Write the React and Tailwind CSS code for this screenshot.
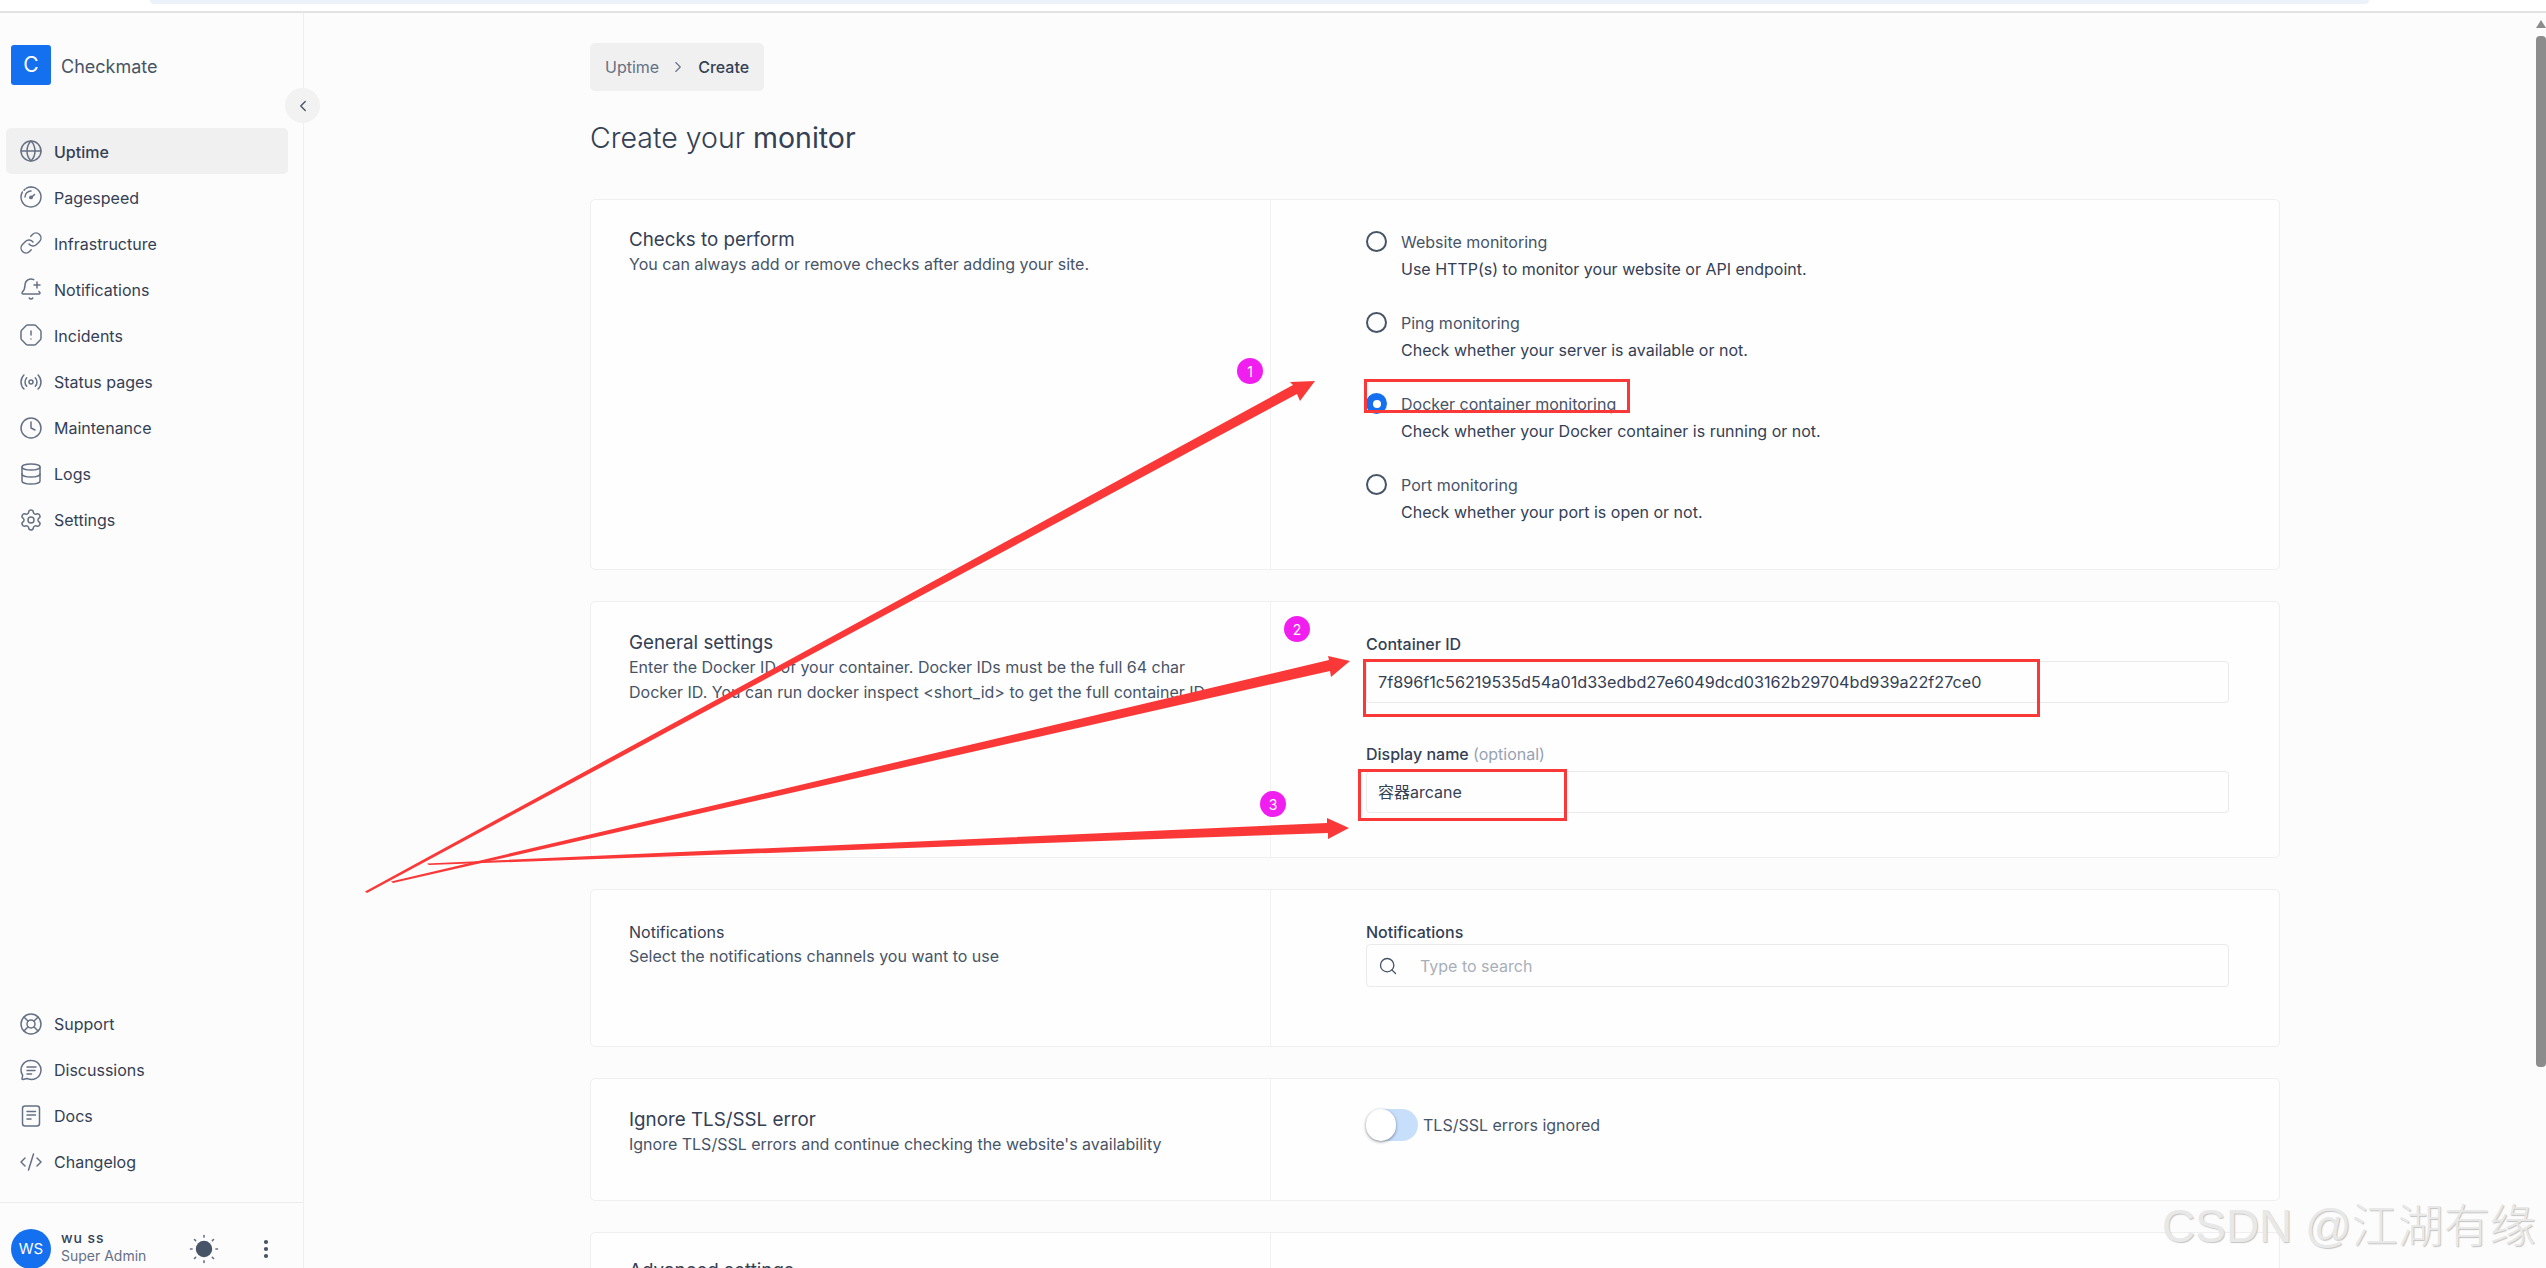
import React from "react";
import { Globe, Link, BellPlus, OctagonAlert, Radio, Clock, Database, Settings, LifeBuoy, CodeXml, EllipsisVertical, ChevronLeft, ChevronRight, Search } from "lucide-react";

const Gauge = (p) => (
  <svg viewBox="0 0 24 24" fill="none" stroke="currentColor" strokeWidth="1.5" strokeLinecap="round" strokeLinejoin="round" {...p}>
    <path d="M12 2a10 10 0 1 1-8.66 5" />
    <path d="M5 5.2 6.2 4" />
    <path d="M7.5 3.1A10 10 0 0 1 12 2" />
    <path d="M6 12a6 6 0 0 1 6-6" />
    <path d="M12.2 12.6 15.5 9.5" strokeWidth="1.5" />
    <circle cx="12" cy="12.4" r="1.2" fill="currentColor" />
  </svg>
);
const Chat = (p) => (
  <svg viewBox="0 0 24 24" fill="none" stroke="currentColor" strokeWidth="1.5" strokeLinecap="round" strokeLinejoin="round" {...p}>
    <path d="M12.5 2.5a9.5 9.5 0 1 1-3.6 18.3l-.9-.4-4.2 1.1c-.5.1-.9-.3-.8-.8l.7-3.3-.4-.8A9.5 9.5 0 0 1 12.5 2.5Z" />
    <path d="M8 9h9M8 12.5h8M8 16h4.5" />
  </svg>
);
const Doc = (p) => (
  <svg viewBox="0 0 24 24" fill="none" stroke="currentColor" strokeWidth="1.7" strokeLinecap="round" strokeLinejoin="round" {...p}>
    <rect x="3.5" y="2" width="17" height="20" rx="2.5" />
    <path d="M8 7.5h8.5M8 11h8.5M8 15h4" />
  </svg>
);
const Sun = (p) => (
  <svg viewBox="0 0 30 30" fill="none" stroke="#667085" strokeWidth="1.6" strokeLinecap="round" {...p}>
    <circle cx="15" cy="15" r="8.2" fill="#475467" stroke="none" />
    <path d="M15 1.5v1.6M15 26.9v1.6M1.5 15h1.6M26.9 15h1.6M5.5 5.5l1.1 1.1M23.4 23.4l1.1 1.1M5.5 24.5l1.1-1.1M23.4 6.6l1.1-1.1" />
  </svg>
);

const mainNav = [
  ["Uptime", Globe, true],
  ["Pagespeed", Gauge],
  ["Infrastructure", Link],
  ["Notifications", BellPlus],
  ["Incidents", OctagonAlert],
  ["Status pages", Radio],
  ["Maintenance", Clock],
  ["Logs", Database],
  ["Settings", Settings],
];
const otherNav = [
  ["Support", LifeBuoy],
  ["Discussions", Chat],
  ["Docs", Doc],
  ["Changelog", CodeXml],
];

function NavItem({ label, Icon, active }) {
  return (
    <div className={"flex h-[46.1px] w-[282px] items-center gap-[11px] rounded-[5px] pl-[13px] text-[16px] " + (active ? "bg-[#f0f0f0] font-medium text-[#344054]" : "text-[#344054]")}>
      <Icon className="h-[24px] w-[24px] shrink-0 text-[#667085]" strokeWidth={1.5} />
      <span className="pt-[1px]">{label}</span>
    </div>
  );
}

function Sidebar() {
  return (
    <aside className="relative flex w-[304px] shrink-0 flex-col border-r border-[#efefef] pt-[32px]">
      <div className="flex items-center gap-[10px] pl-[11px]">
        <div className="flex h-[40px] w-[40px] items-center justify-center rounded-[3px] bg-[#1570ef] text-[21px] text-white">C</div>
        <span className="pt-[2px] text-[18px] text-[#475467]">Checkmate</span>
      </div>
      <button className="absolute left-[285px] top-[75px] flex h-[35px] w-[35px] items-center justify-center rounded-full bg-[#f2f2f2] text-[#475467]">
        <ChevronLeft className="h-[18px] w-[18px]" strokeWidth={1.8} />
      </button>
      <nav className="mt-[43px] flex flex-col pl-[6px]">
        {mainNav.map(([l, I, a]) => <NavItem key={l} label={l} Icon={I} active={a} />)}
      </nav>
      <nav className="mt-auto flex flex-col pl-[6px]">
        {otherNav.map(([l, I]) => <NavItem key={l} label={l} Icon={I} />)}
      </nav>
      <div className="mt-[17px] flex h-[66px] shrink-0 border-t border-[#ececec] pl-[11px] pt-[26px]">
        <div className="flex h-[40px] w-[40px] shrink-0 items-center justify-center rounded-full bg-[#1570ef] text-[15px] text-white">WS</div>
        <div className="ml-[10px] w-[120px]">
          <div className="text-[14px] font-medium leading-[18px] tracking-[0.9px] text-[#344054]">wu ss</div>
          <div className="text-[14px] leading-[18px] text-[#667085]">Super Admin</div>
        </div>
        <Sun className="mt-[5px] ml-[8px] h-[30px] w-[30px]" />
        <EllipsisVertical className="ml-[35px] mt-[8px] h-[24px] w-[24px] text-[#475467]" strokeWidth={2.2} />
      </div>
    </aside>
  );
}

function Card({ className, left, right }) {
  return (
    <section className={"flex shrink-0 rounded-[5px] border border-[#efefef] bg-[#fefefe] " + className}>
      <div className="w-[680px] shrink-0 border-r border-[#f1f1f1] px-[38px]">{left}</div>
      <div className="flex-1 pl-[95px] pr-[50px]">{right}</div>
    </section>
  );
}

const H = ({ children }) => <h2 className="text-[18.8px] leading-[24px] text-[#344054]">{children}</h2>;
const P = ({ children }) => <p className="text-[16px] leading-[25px] text-[#475467]">{children}</p>;
const Label = ({ children }) => <div className="text-[16px] font-medium leading-[24px] text-[#344054]">{children}</div>;

function RadioRow({ title, desc, checked }) {
  return (
    <div className="relative pl-[35px]">
      <span className={"absolute left-0 top-[1px] flex h-[21px] w-[21px] items-center justify-center rounded-full " + (checked ? "bg-[#1570ef]" : "border-[2.5px] border-[#475467]")}>
        {checked && <span className="h-[8px] w-[8px] rounded-full bg-white" />}
      </span>
      <div className="text-[16px] leading-[24px] text-[#475467]">{title}</div>
      <div className="mt-[3px] text-[16px] leading-[24px] text-[#344054]">{desc}</div>
    </div>
  );
}

const Input = ({ className, children }) => (
  <div className={"flex items-center rounded-[4px] border border-[#eaeaea] bg-[#fefefe] pl-[11px] text-[16px] text-[#344054] " + className}>{children}</div>
);

const Badge = ({ className, children }) => (
  <div className={"absolute flex h-[26px] w-[26px] items-center justify-center rounded-full bg-[#f01ff0] text-[14px] text-white " + className}>{children}</div>
);

function Annotations() {
  return (
    <>
      <svg className="pointer-events-none absolute left-0 top-0 h-[1268px] w-[2546px]" viewBox="0 0 2546 1268">
        <polygon fill="#fb3838" points="365,891.5 1293,385 1290,382 1315,381 1300,401 1297,394 367,893" />
        <polygon fill="#fb3838" points="391,881.5 1329,660 1328,656 1350,661 1331,677 1330,671 393,883" />
        <polygon fill="#fb3838" points="427,863.5 1327,823 1327,818 1349,828 1328,839 1328,833 429,865" />
      </svg>
      <div className="absolute left-[1364px] top-[379px] h-[34px] w-[266px] border-[3px] border-[#fb3838]" />
      <div className="absolute left-[1363px] top-[659px] h-[58px] w-[677px] border-[3px] border-[#fb3838]" />
      <div className="absolute left-[1358px] top-[769px] h-[52px] w-[209px] border-[3px] border-[#fb3838]" />
      <Badge className="left-[1237px] top-[358px]">1</Badge>
      <Badge className="left-[1284px] top-[616px]">2</Badge>
      <Badge className="left-[1260px] top-[791px]">3</Badge>
      <div className="absolute left-[2162px] top-[1198px] whitespace-nowrap font-[family-name:'Liberation_Sans','Noto_Sans_CJK_SC',sans-serif] text-[46px] font-light leading-[56px] text-[#e8e8e8] [text-shadow:1px_1px_1px_#c4c4c4]">CSDN @江湖有缘</div>
    </>
  );
}

export default function App() {
  return (
    <div className="relative flex h-screen w-full flex-col overflow-hidden bg-[#fcfcfc] font-[family-name:Inter,'Noto_Sans_CJK_SC',sans-serif]">
      <header className="h-[13px] shrink-0 border-b-2 border-[#e3e3e3] bg-white pl-[150px]">
        <div className="h-[4px] w-[2219px] rounded-b-[10px] bg-[#ecf2fa]" />
      </header>
      <div className="flex min-h-0 flex-1">
        <Sidebar />
        <main className="min-w-0 flex-1 pl-[286px] pt-[30px]">
          <div className="flex h-[48px] w-[174px] items-center rounded-[5px] bg-[#f0f0f0] pl-[15px] text-[16px]">
            <span className="text-[#667085]">Uptime</span>
            <ChevronRight className="ml-[10px] h-[18px] w-[18px] text-[#667085]" strokeWidth={1.5} />
            <span className="ml-[11px] font-medium text-[#344054]">Create</span>
          </div>
          <h1 className="mt-[29px] text-[28.5px] font-light leading-[36px] text-[#344054]">Create your <span className="font-normal">monitor</span></h1>
          <div className="mt-[43px] flex w-[1690px] flex-col gap-[31px]">
            <Card
              className="h-[371px]"
              left={<div className="pt-[28px]"><H>Checks to perform</H><P>You can always add or remove checks after adding your site.</P></div>}
              right={
                <div className="flex flex-col gap-[30px] pt-[30px]">
                  <RadioRow title="Website monitoring" desc="Use HTTP(s) to monitor your website or API endpoint." />
                  <RadioRow title="Ping monitoring" desc="Check whether your server is available or not." />
                  <RadioRow checked title="Docker container monitoring" desc="Check whether your Docker container is running or not." />
                  <RadioRow title="Port monitoring" desc="Check whether your port is open or not." />
                </div>
              }
            />
            <Card
              className="h-[257px]"
              left={<div className="pt-[29px]"><H>General settings</H><P>Enter the Docker ID of your container. Docker IDs must be the full 64 char Docker ID. You can run docker inspect &lt;short_id&gt; to get the full container ID.</P></div>}
              right={
                <div className="pt-[30px]">
                  <Label>Container ID</Label>
                  <Input className="mt-[5px] h-[42px]"><span className="text-[16.2px]">7f896f1c56219535d54a01d33edbd27e6049dcd03162b29704bd939a22f27ce0</span></Input>
                  <div className="mt-[39px]"><Label>Display name <span className="font-normal text-[#98a2b3]">(optional)</span></Label></div>
                  <Input className="mt-[5px] h-[42px]">容器arcane</Input>
                </div>
              }
            />
            <Card
              className="h-[158px]"
              left={<div className="pt-[30px]"><div className="text-[16px] leading-[24px] text-[#344054]">Notifications</div><P>Select the notifications channels you want to use</P></div>}
              right={
                <div className="pt-[30px]">
                  <Label>Notifications</Label>
                  <Input className="h-[43px]">
                    <Search className="h-[20px] w-[20px] text-[#475467]" strokeWidth={1.6} />
                    <span className="ml-[22px] text-[#a9afb9]">Type to search</span>
                  </Input>
                </div>
              }
            />
            <Card
              className="h-[123px]"
              left={<div className="pt-[29px]"><H>Ignore TLS/SSL error</H><P>Ignore TLS/SSL errors and continue checking the website's availability</P></div>}
              right={
                <div className="flex items-center pt-[30px]">
                  <div className="flex h-[32px] w-[52px] items-center rounded-full bg-[#c8dffc]">
                    <div className="h-[32px] w-[30px] rounded-full bg-white shadow-[0_1px_3px_rgba(16,24,40,0.5)]" />
                  </div>
                  <span className="ml-[5px] text-[16px] text-[#475467]">TLS/SSL errors ignored</span>
                </div>
              }
            />
            <Card
              className="h-[200px]"
              left={<div className="pt-[26px]"><H>Advanced settings</H></div>}
              right={null}
            />
          </div>
        </main>
        <div className="flex w-[10px] shrink-0 flex-col items-center">
          <div className="mt-[7px] h-0 w-0 border-x-[5px] border-b-[8px] border-x-transparent border-b-[#8c8c8c]" />
          <div className="mt-[8px] h-[1031px] w-[10px] rounded-[4px] bg-[#8c8c8c]" />
        </div>
      </div>
      <Annotations />
    </div>
  );
}
